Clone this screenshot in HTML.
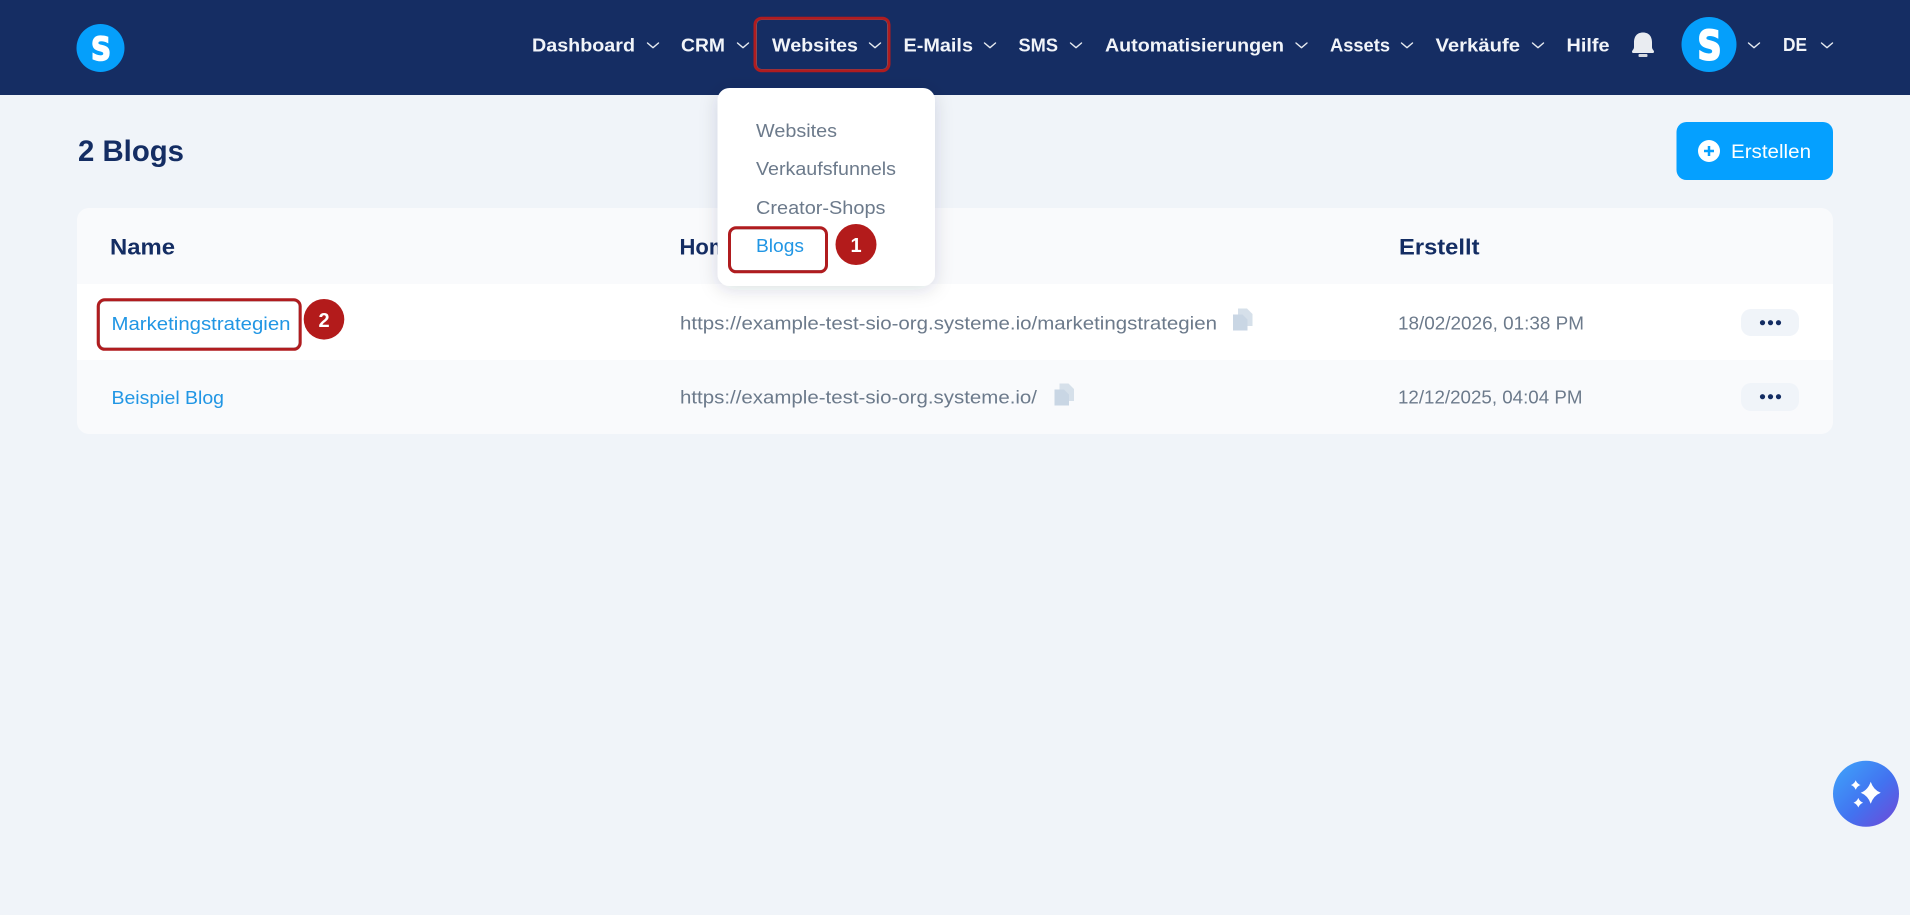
<!DOCTYPE html>
<html lang="de">
<head>
<meta charset="utf-8">
<title>2 Blogs</title>
<style>
html,body{margin:0;padding:0;width:1910px;height:915px;overflow:hidden;background:#f0f4f9}
svg{display:block}
text{font-family:"Liberation Sans",sans-serif}
.nav{font-size:18.5px;font-weight:700;fill:#f1f4f9}
.th{font-size:22px;font-weight:700;fill:#142d63}
.lnk{font-size:18.5px;fill:#2196e4}
.mut{font-size:18.5px;fill:#6c7a8b}
.num{font-size:20px;font-weight:700;fill:#fff}
.logo{font-family:"DejaVu Sans",sans-serif;font-weight:700;fill:#fff;stroke:#fff}
.chev{fill:none;stroke:#e6eaf0;stroke-width:1.4;stroke-linecap:round;stroke-linejoin:round}
.red{fill:none;stroke:#b01c1f;stroke-width:3}
.redo{fill:none;stroke:#7f858e;stroke-width:1;opacity:.75}
</style>
</head>
<body>
<svg width="1910" height="915" viewBox="0 0 1910 915" xmlns="http://www.w3.org/2000/svg">
<defs>
<linearGradient id="ai" x1="0" y1="0" x2="1" y2="1"><stop offset="0" stop-color="#3fa6fb"/><stop offset=".55" stop-color="#4272f0"/><stop offset="1" stop-color="#7047d6"/></linearGradient>
<filter id="sh" x="-20%" y="-20%" width="140%" height="140%"><feDropShadow dx="0" dy="4" stdDeviation="9" flood-color="#1a2b4a" flood-opacity=".14"/></filter>
</defs>

<rect width="1910" height="915" fill="#f0f4f9"/>

<!-- Header -->
<rect width="1910" height="95" fill="#152d63"/>
<circle cx="100.500" cy="48" r="24" fill="#059ffb"/>
<text class="logo" x="91" y="60" font-size="32" stroke-width="1.500" textLength="20" lengthAdjust="spacingAndGlyphs">S</text>

<text class="nav" x="532" y="51.700" textLength="103" lengthAdjust="spacingAndGlyphs">Dashboard</text>
<path class="chev" d="M647.500 43l5.500 4.700 5.500-4.700"/>
<text class="nav" x="681" y="51.700" textLength="44" lengthAdjust="spacingAndGlyphs">CRM</text>
<path class="chev" d="M737.500 43l5.500 4.700 5.500-4.700"/>
<rect class="redo" x="756.500" y="19.500" width="131" height="50" rx="5"/>
<rect class="red" x="755" y="18.200" width="134" height="52.500" rx="6.500"/>
<text class="nav" x="772" y="51.700" textLength="86" lengthAdjust="spacingAndGlyphs">Websites</text>
<path class="chev" d="M869.500 43l5.500 4.700 5.500-4.700"/>
<text class="nav" x="903.500" y="51.700" textLength="69.500" lengthAdjust="spacingAndGlyphs">E-Mails</text>
<path class="chev" d="M984.500 43l5.500 4.700 5.500-4.700"/>
<text class="nav" x="1018.500" y="51.700" textLength="39.500" lengthAdjust="spacingAndGlyphs">SMS</text>
<path class="chev" d="M1070.500 43l5.500 4.700 5.500-4.700"/>
<text class="nav" x="1105" y="51.700" textLength="179" lengthAdjust="spacingAndGlyphs">Automatisierungen</text>
<path class="chev" d="M1296 43l5.500 4.700 5.500-4.700"/>
<text class="nav" x="1330" y="51.700" textLength="60" lengthAdjust="spacingAndGlyphs">Assets</text>
<path class="chev" d="M1401.500 43l5.500 4.700 5.500-4.700"/>
<text class="nav" x="1435.500" y="51.700" textLength="84.500" lengthAdjust="spacingAndGlyphs">Verkäufe</text>
<path class="chev" d="M1532.500 43l5.500 4.700 5.500-4.700"/>
<text class="nav" x="1566.500" y="51.700" textLength="43" lengthAdjust="spacingAndGlyphs">Hilfe</text>
<path d="M1643 32.500c-6.500 0-9 4.500-9 10v4.500c0 2.700-2 3.200-2 4.700 0 1 .5 1.300 2 1.300h18c1.500 0 2-.3 2-1.300 0-1.500-2-2-2-4.700v-4.500c0-5.500-2.500-10-9-10z" fill="#e9ecf1"/>
<rect x="1638.500" y="54" width="9" height="3" rx="1" fill="#d5d9e0"/>
<circle cx="1709" cy="44.500" r="27.500" fill="#059ffb"/>
<text class="logo" x="1697.500" y="59.500" font-size="40" stroke-width="2" textLength="24" lengthAdjust="spacingAndGlyphs">S</text>
<path class="chev" d="M1748.500 43l5.500 4.700 5.500-4.700"/>
<text class="nav" x="1783" y="51" textLength="24" lengthAdjust="spacingAndGlyphs">DE</text>
<path class="chev" d="M1821.500 43l5.500 4.700 5.500-4.700"/>

<!-- Title -->
<text x="78" y="161" font-size="30" font-weight="700" fill="#142d63" textLength="106" lengthAdjust="spacingAndGlyphs">2 Blogs</text>

<!-- Button -->
<rect x="1676.500" y="122" width="156.500" height="58" rx="10" fill="#05a0ff"/>
<circle cx="1709" cy="151" r="11" fill="#fff"/>
<path d="M1709 146v10M1704 151h10" stroke="#05a0ff" stroke-width="2.500" fill="none"/>
<text x="1731" y="158" font-size="19" fill="#fff" textLength="80" lengthAdjust="spacingAndGlyphs">Erstellen</text>

<!-- Table -->
<rect x="77" y="208" width="1756" height="226" rx="12" fill="#f9fafc"/>
<rect x="77" y="284" width="1756" height="76" fill="#fff"/>
<text class="th" x="110" y="254.500" textLength="65" lengthAdjust="spacingAndGlyphs">Name</text>
<text class="th" x="679.500" y="254.500">Homepage</text>
<text class="th" x="1399" y="254.500" textLength="80.500" lengthAdjust="spacingAndGlyphs">Erstellt</text>

<text class="lnk" x="111.500" y="330" textLength="179" lengthAdjust="spacingAndGlyphs">Marketingstrategien</text>
<text class="mut" x="680" y="329.500" textLength="537" lengthAdjust="spacingAndGlyphs">https://example-test-sio-org.systeme.io/marketingstrategien</text>
<path d="M1238 308.500h9l5.500 5.500v12h-5v4h-9.500z" fill="#d6e0ea"/>
<path d="M1233 314.500h9.500l5 5v11h-14.500z" fill="#c9d6e4"/>
<text class="mut" x="1398" y="329.500" textLength="186" lengthAdjust="spacingAndGlyphs">18/02/2026, 01:38 PM</text>
<rect x="1741" y="309" width="58" height="27" rx="10" fill="#f0f4f9"/>
<circle cx="1762.500" cy="322.700" r="2.600" fill="#142d63"/><circle cx="1770.500" cy="322.700" r="2.600" fill="#142d63"/><circle cx="1778.500" cy="322.700" r="2.600" fill="#142d63"/>

<text class="lnk" x="111.500" y="404" textLength="112.500" lengthAdjust="spacingAndGlyphs">Beispiel Blog</text>
<text class="mut" x="680" y="403.500" textLength="357" lengthAdjust="spacingAndGlyphs">https://example-test-sio-org.systeme.io/</text>
<path d="M1059.500 383.500h9l5.500 5.500v12h-5v4h-9.500z" fill="#d6e0ea"/>
<path d="M1054.500 389.500h9.500l5 5v11h-14.500z" fill="#c9d6e4"/>
<text class="mut" x="1398" y="403.500" textLength="184.500" lengthAdjust="spacingAndGlyphs">12/12/2025, 04:04 PM</text>
<rect x="1741" y="383" width="58" height="28" rx="10" fill="#f0f4f9"/>
<circle cx="1762.500" cy="396.700" r="2.600" fill="#142d63"/><circle cx="1770.500" cy="396.700" r="2.600" fill="#142d63"/><circle cx="1778.500" cy="396.700" r="2.600" fill="#142d63"/>

<!-- Annotation 2 -->
<rect class="redo" x="99.500" y="301" width="199.500" height="47" rx="5"/>
<rect class="red" x="98.200" y="299.800" width="202" height="49.500" rx="6.500"/>
<circle cx="324" cy="319.300" r="20.300" fill="#b31b1b"/>
<text class="num" x="324" y="327" text-anchor="middle">2</text>

<!-- Dropdown -->
<rect x="717.500" y="88" width="217.500" height="198" rx="12" fill="#fff" filter="url(#sh)"/>
<text class="mut" x="756" y="137" textLength="81" lengthAdjust="spacingAndGlyphs">Websites</text>
<text class="mut" x="756" y="175" textLength="140" lengthAdjust="spacingAndGlyphs">Verkaufsfunnels</text>
<text class="mut" x="756" y="214" textLength="129.500" lengthAdjust="spacingAndGlyphs">Creator-Shops</text>
<text class="lnk" x="756" y="252" textLength="48" lengthAdjust="spacingAndGlyphs">Blogs</text>
<rect class="redo" x="730.500" y="229" width="95" height="41.500" rx="5"/>
<rect class="red" x="729.500" y="227.800" width="97" height="44" rx="6.500"/>
<circle cx="856" cy="244.500" r="20.500" fill="#b31b1b"/>
<text class="num" x="856" y="252" text-anchor="middle">1</text>

<!-- AI button -->
<circle cx="1866" cy="793.700" r="33" fill="url(#ai)"/>
<path d="M1870.700 781.700Q1873.500 790 1880.700 792.700 1873.500 795.500 1870.700 803.700 1868 795.500 1860.700 792.700 1868 790 1870.700 781.700z" fill="#fff"/>
<path d="M1855.700 780.200Q1857 783.700 1860.500 785 1857 786.300 1855.700 789.800 1854.400 786.300 1850.900 785 1854.400 783.700 1855.700 780.200z" fill="#fff"/>
<path d="M1858.300 797.900Q1859.600 801.400 1863.100 802.700 1859.600 804 1858.300 807.500 1857 804 1853.500 802.700 1857 801.400 1858.300 797.900z" fill="#fff"/>
</svg>
</body>
</html>
